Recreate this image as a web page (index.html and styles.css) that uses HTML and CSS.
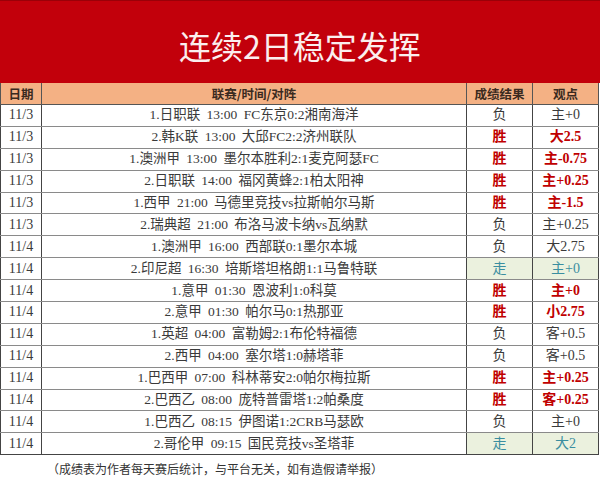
FILE: index.html
```html
<!DOCTYPE html>
<html lang="zh">
<head>
<meta charset="utf-8">
<link rel="stylesheet" href="styles.css">
</head>
<body>
<div class="banner"><h1 class="title">连续2日稳定发挥</h1></div>
<table class="grid">
<colgroup><col class="c-date"><col class="c-match"><col class="c-res"><col class="c-view"></colgroup>
<thead>
<tr><th>日期</th><th>联赛/时间/对阵</th><th>成绩结果</th><th>观点</th></tr>
</thead>
<tbody>
<tr><td>11/3</td><td>1.日职联 13:00 FC东京0:2湘南海洋</td><td>负</td><td>主+0</td></tr>
<tr class="win"><td>11/3</td><td>2.韩K联 13:00 大邱FC2:2济州联队</td><td>胜</td><td>大2.5</td></tr>
<tr class="win"><td>11/3</td><td>1.澳洲甲 13:00 墨尔本胜利2:1麦克阿瑟FC</td><td>胜</td><td>主-0.75</td></tr>
<tr class="win"><td>11/3</td><td>2.日职联 14:00 福冈黄蜂2:1柏太阳神</td><td>胜</td><td>主+0.25</td></tr>
<tr class="win"><td>11/3</td><td>1.西甲 21:00 马德里竞技vs拉斯帕尔马斯</td><td>胜</td><td>主-1.5</td></tr>
<tr><td>11/3</td><td>2.瑞典超 21:00 布洛马波卡纳vs瓦纳默</td><td>负</td><td>主+0.25</td></tr>
<tr><td>11/4</td><td>1.澳洲甲 16:00 西部联0:1墨尔本城</td><td>负</td><td>大2.75</td></tr>
<tr class="push"><td>11/4</td><td>2.印尼超 16:30 培斯塔坦格朗1:1马鲁特联</td><td>走</td><td>主+0</td></tr>
<tr class="win"><td>11/4</td><td>1.意甲 01:30 恩波利1:0科莫</td><td>胜</td><td>主+0</td></tr>
<tr class="win"><td>11/4</td><td>2.意甲 01:30 帕尔马0:1热那亚</td><td>胜</td><td>小2.75</td></tr>
<tr><td>11/4</td><td>1.英超 04:00 富勒姆2:1布伦特福德</td><td>负</td><td>客+0.5</td></tr>
<tr><td>11/4</td><td>2.西甲 04:00 塞尔塔1:0赫塔菲</td><td>负</td><td>客+0.5</td></tr>
<tr class="win"><td>11/4</td><td>1.巴西甲 07:00 科林蒂安2:0帕尔梅拉斯</td><td>胜</td><td>主+0.25</td></tr>
<tr class="win"><td>11/4</td><td>2.巴西乙 08:00 庞特普雷塔1:2帕桑度</td><td>胜</td><td>客+0.25</td></tr>
<tr><td>11/4</td><td>1.巴西乙 08:15 伊图诺1:2CRB马瑟欧</td><td>负</td><td>主+0</td></tr>
<tr class="push"><td>11/4</td><td>2.哥伦甲 09:15 国民竞技vs圣塔菲</td><td>走</td><td>大2</td></tr>
</tbody>
</table>
<p class="note">（成绩表为作者每天赛后统计，与平台无关，如有造假请举报）</p>
</body>
</html>
```
FILE: styles.css
```css
html, body {
  margin: 0;
  padding: 0;
  background: #ffffff;
  width: 600px;
  height: 480px;
  overflow: hidden;
}
body {
  font-family: "Liberation Serif", "Noto Sans CJK SC", serif;
  color: #333333;
}
.banner {
  height: 83px;
  background: #c2000b;
  border-top: 1px solid #9a0008;
  box-sizing: border-box;
  display: flex;
  align-items: center;
  justify-content: center;
}
.title {
  margin: 6px 0 0 0;
  font-family: "Noto Sans CJK SC", sans-serif;
  font-weight: 400;
  font-size: 32px;
  letter-spacing: 0px;
  color: #fbeeee;
}
.grid {
  border-collapse: collapse;
  table-layout: fixed;
  width: 598px;
  font-size: 13.5px;
}
.c-date { width: 41px; }
.c-match { width: 425px; }
.c-res { width: 66px; }
.c-view { width: 66px; }
.grid th {
  background: #f4b184;
  height: 21px;
  padding: 0;
  font-family: "Noto Sans CJK SC", sans-serif;
  font-weight: 700;
  font-size: 12.5px;
  color: #3a2a20;
  border: 1px solid #555;
  border-top: none;
  text-align: center;
  line-height: 21px;
}
.grid td {
  height: 20.9px;
  padding: 0;
  text-align: center;
  line-height: 20px;
  border-left: 1px solid #444;
  border-right: 1px solid #444;
  border-bottom: 1px solid #8a8a8a;
  white-space: nowrap;
  color: #3a3a3a;
  word-spacing: 3px;
}
.grid tbody tr:last-child td { border-bottom: 1px solid #444; }
.grid td:first-child { font-size: 14px; word-spacing: 0; }
.grid td:nth-child(3), .grid td:nth-child(4) { font-size: 14px; word-spacing: 0; }
.win td:nth-child(3), .win td:nth-child(4) {
  color: #c00000;
  font-weight: 700;
}
.push td:nth-child(3), .push td:nth-child(4) {
  background: #ebf1de;
  color: #3a8ea0;
}
.note {
  margin: 5px 0 0 47px;
  font-family: "Noto Sans CJK SC", sans-serif;
  font-size: 12px;
  color: #333;
}
```
